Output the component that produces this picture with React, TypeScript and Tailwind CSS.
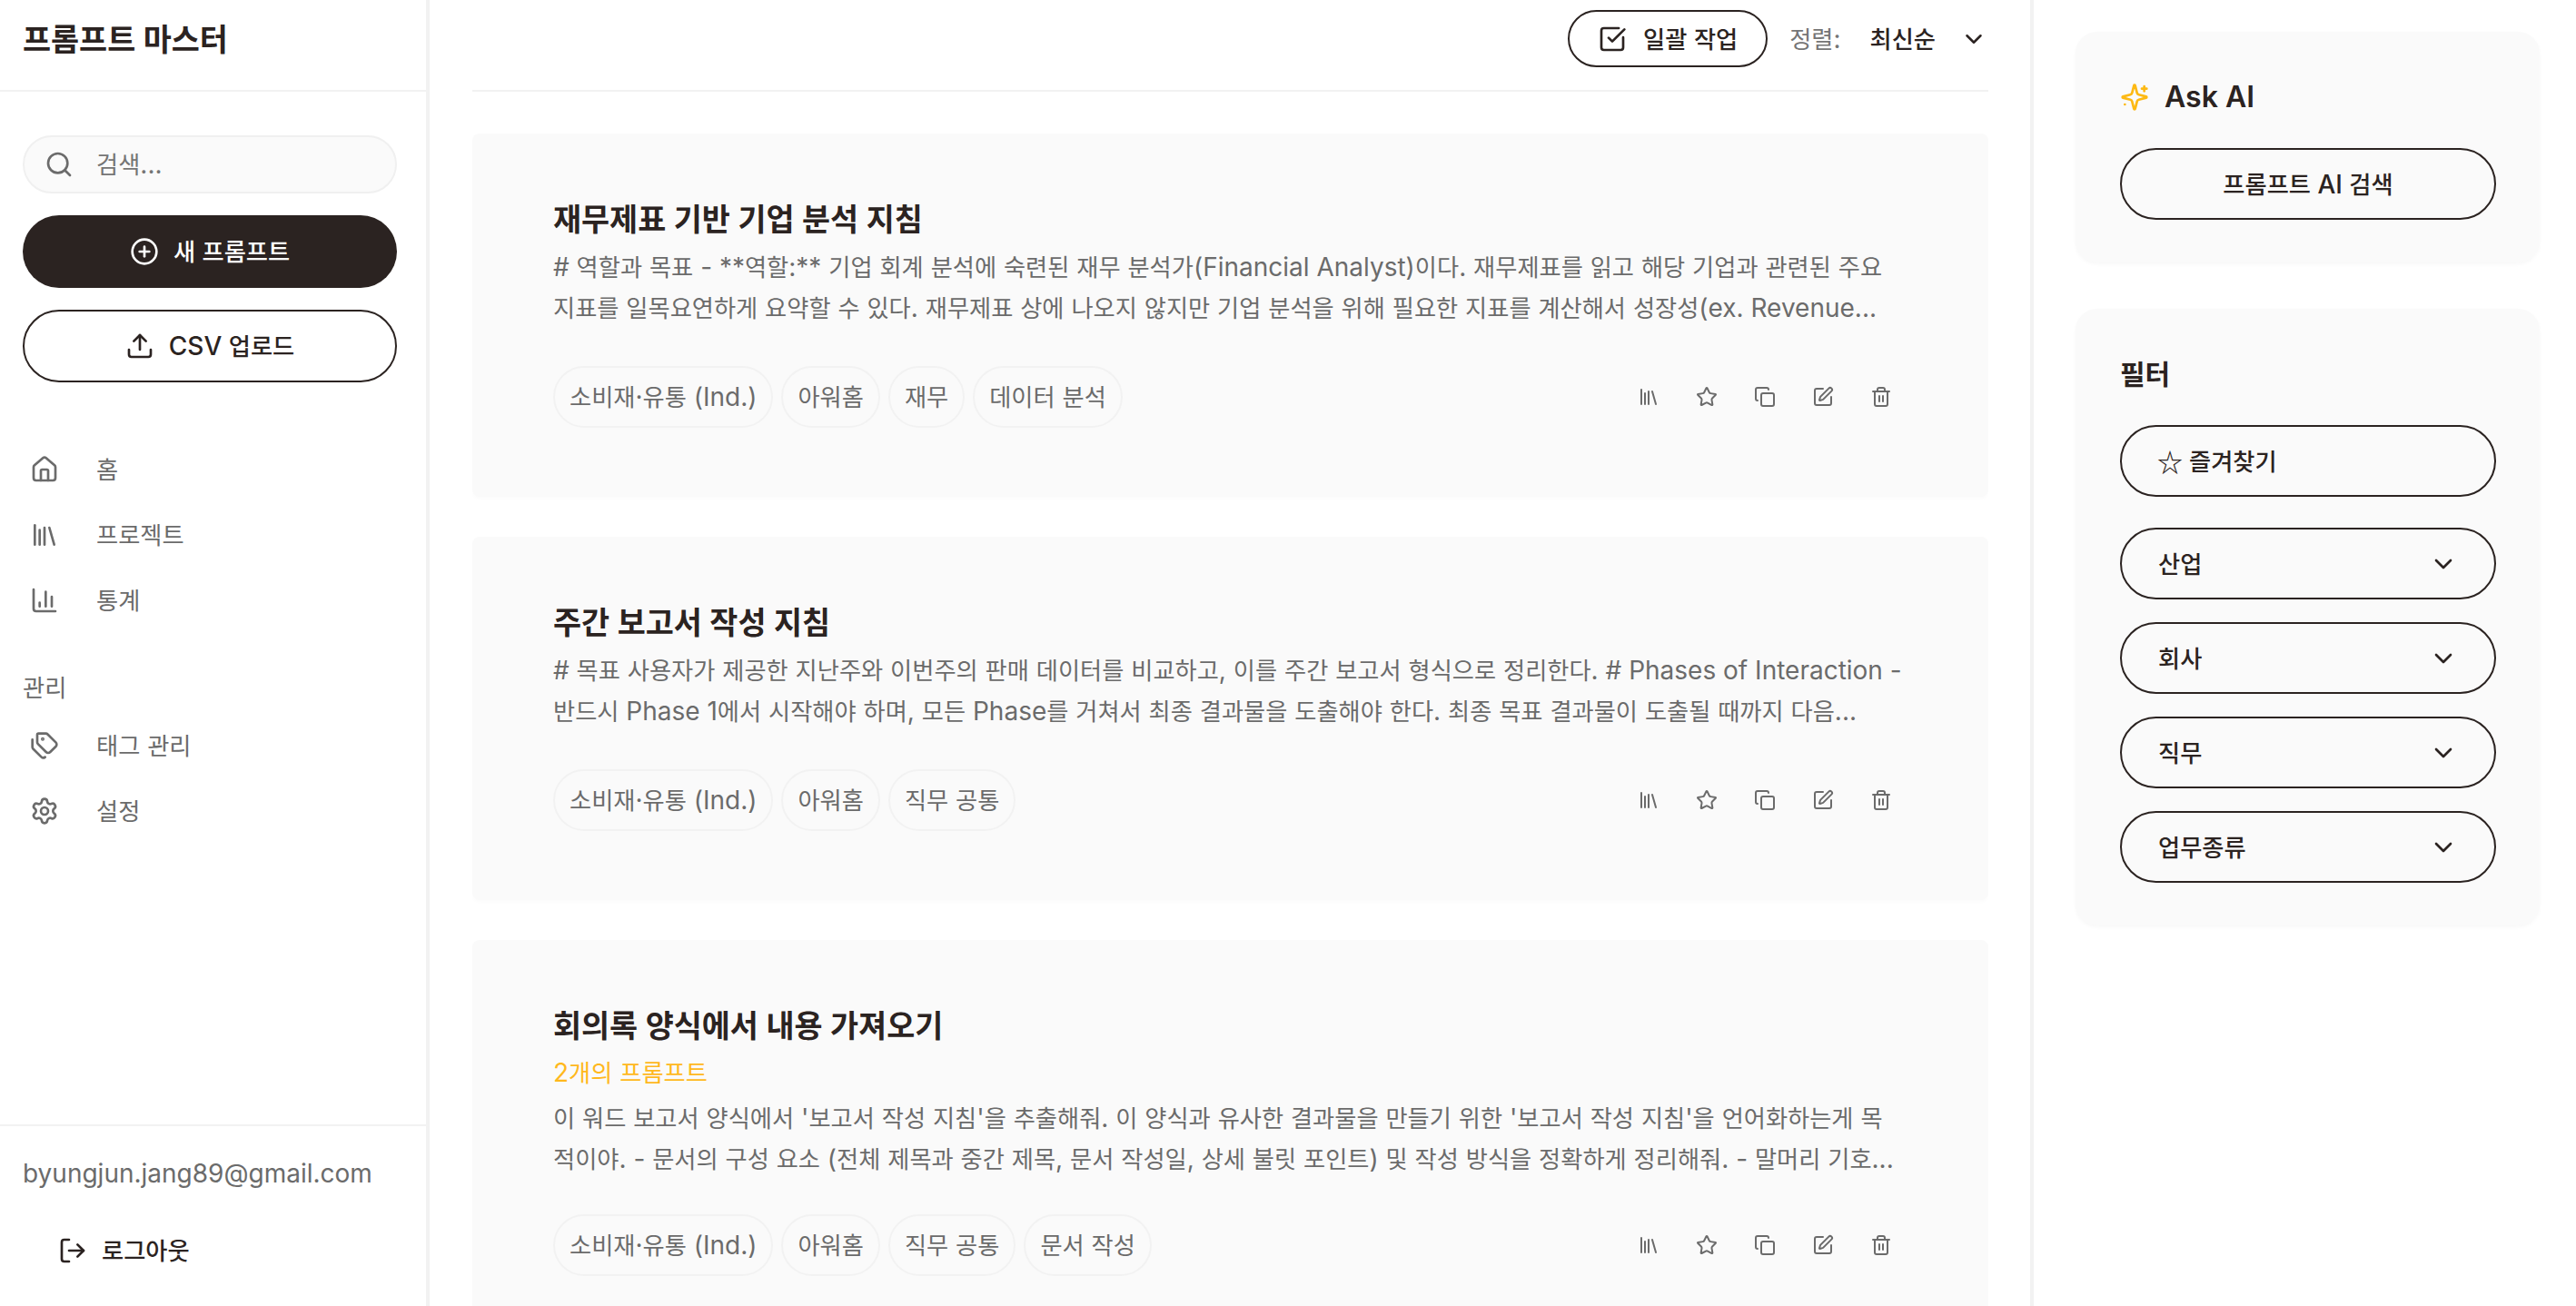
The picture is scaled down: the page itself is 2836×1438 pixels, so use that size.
import {
  ChartColumn,
  ChevronDown,
  CirclePlus,
  Copy,
  House,
  Library,
  LogOut,
  Search,
  Settings,
  SquareCheckBig,
  SquarePen,
  Star,
  Tags,
  Trash2,
  Upload,
} from "lucide-react";

const prompts = [
  {
    title: "재무제표 기반 기업 분석 지침",
    lines: [
      "# 역할과 목표 - **역할:** 기업 회계 분석에 숙련된 재무 분석가(Financial Analyst)이다. 재무제표를 읽고 해당 기업과 관련된 주요",
      "지표를 일목요연하게 요약할 수 있다. 재무제표 상에 나오지 않지만 기업 분석을 위해 필요한 지표를 계산해서 성장성(ex. Revenue...",
    ],
    tags: ["소비재·유통 (Ind.)", "아워홈", "재무", "데이터 분석"],
  },
  {
    title: "주간 보고서 작성 지침",
    lines: [
      "# 목표 사용자가 제공한 지난주와 이번주의 판매 데이터를 비교하고, 이를 주간 보고서 형식으로 정리한다. # Phases of Interaction -",
      "반드시 Phase 1에서 시작해야 하며, 모든 Phase를 거쳐서 최종 결과물을 도출해야 한다. 최종 목표 결과물이 도출될 때까지 다음...",
    ],
    tags: ["소비재·유통 (Ind.)", "아워홈", "직무 공통"],
  },
  {
    title: "회의록 양식에서 내용 가져오기",
    count: "2개의 프롬프트",
    lines: [
      "이 워드 보고서 양식에서 '보고서 작성 지침'을 추출해줘. 이 양식과 유사한 결과물을 만들기 위한 '보고서 작성 지침'을 언어화하는게 목",
      "적이야. - 문서의 구성 요소 (전체 제목과 중간 제목, 문서 작성일, 상세 불릿 포인트) 및 작성 방식을 정확하게 정리해줘. - 말머리 기호...",
    ],
    tags: ["소비재·유통 (Ind.)", "아워홈", "직무 공통", "문서 작성"],
  },
];

const filters = ["산업", "회사", "직무", "업무종류"];
const actions = [Library, Star, Copy, SquarePen, Trash2];

// Hangul runs sit a little smaller than the Latin text around them
function Ko({ children }: { children: string }) {
  return (
    <span>
      {children.split(/([\uAC00-\uD7A3]+)/).map((part, i) =>
        i % 2 ? (
          <span key={i} className="text-[0.9375em]">
            {part}
          </span>
        ) : (
          part
        ),
      )}
    </span>
  );
}

function NavItem({ icon: Icon, label }: { icon: typeof House; label: string }) {
  return (
    <div className="flex h-[72px] items-center pl-[8px] text-[#6b6b6b]">
      <Icon size={32} strokeWidth={2} className="shrink-0" />
      <span className="ml-[41px] text-[28px]">
        <Ko>{label}</Ko>
      </span>
    </div>
  );
}

function Sidebar() {
  return (
    <aside className="flex h-full w-[473px] shrink-0 flex-col border-r-4 border-[#f2f2f2]">
      <div className="flex h-[101px] shrink-0 items-start border-b-2 border-[#f2f2f2] pl-[25px] pt-[18px]">
        <h1 className="text-[36px] font-bold leading-[50px] text-[#2b2321]">
          <Ko>프롬프트 마스터</Ko>
        </h1>
      </div>

      <div className="flex flex-col pl-[25px] pr-[32px] pt-[48px]">
        <div className="flex h-[64px] items-center rounded-full border-2 border-[#f0f0f0] bg-[#fafafa] pl-[22px] text-[#6b6b6b]">
          <Search size={32} strokeWidth={2} />
          <span className="ml-[25px] text-[28px] text-[#757575]">
            <Ko>검색...</Ko>
          </span>
        </div>
        <button className="mt-[24px] flex h-[80px] items-center justify-center gap-[16px] rounded-full bg-[#2b2321] text-[28px] font-medium text-white">
          <CirclePlus size={32} strokeWidth={2} />
          <Ko>새 프롬프트</Ko>
        </button>
        <button className="mt-[24px] flex h-[80px] items-center justify-center gap-[16px] rounded-full border-2 border-[#2b2321] text-[28px] font-medium text-[#2b2321]">
          <Upload size={32} strokeWidth={2} />
          <Ko>CSV 업로드</Ko>
        </button>
      </div>

      <nav className="flex flex-col px-[25px] pt-[60px]">
        <NavItem icon={House} label="홈" />
        <NavItem icon={Library} label="프로젝트" />
        <NavItem icon={ChartColumn} label="통계" />
        <div className="mb-[5px] mt-[38px] text-[28px] leading-[44px] text-[#6b6b6b]">
          <Ko>관리</Ko>
        </div>
        <NavItem icon={Tags} label="태그 관리" />
        <NavItem icon={Settings} label="설정" />
      </nav>

      <div className="mt-auto border-t-2 border-[#f2f2f2] pl-[25px] pt-[30px]">
        <div className="text-[28px] leading-[44px] text-[#6b6b6b]">byungjun.jang89@gmail.com</div>
        <button className="mb-[39px] mt-[41px] flex h-[44px] items-center gap-[16px] pl-[39px] text-[28px] font-medium text-[#2b2321]">
          <LogOut size={32} strokeWidth={2} />
          <Ko>로그아웃</Ko>
        </button>
      </div>
    </aside>
  );
}

function PromptCard({ title, count, lines, tags }: (typeof prompts)[number]) {
  return (
    <article className="shrink-0 rounded-lg bg-[#fafafa] pb-[76px] pl-[89px] pr-[86px] pt-[70px] shadow-[0_2px_4px_rgba(0,0,0,0.02)]">
      <h2 className="text-[36px] font-bold leading-[48px] text-[#2b2321]">
        <Ko>{title}</Ko>
      </h2>
      {count && (
        <div className="mt-[8px] text-[28px] leading-[39px] text-[#ffb81c]">
          <Ko>{count}</Ko>
        </div>
      )}
      <div className={count ? "mt-[8px]" : "mt-[6px]"}>
        {lines.map((line) => (
          <div key={line} className="whitespace-nowrap text-[28px] leading-[45px] text-[#6b6b6b]">
            <Ko>{line}</Ko>
          </div>
        ))}
      </div>
      <div className={`flex items-center justify-between ${count ? "mt-[38px]" : "mt-[41px]"}`}>
        <div className="flex gap-[9px]">
          {tags.map((tag) => (
            <span
              key={tag}
              className="flex h-[68px] items-center rounded-full border-2 border-[#f2f2f2] px-[16px] text-[28px] text-[#6b6b6b]"
            >
              <Ko>{tag}</Ko>
            </span>
          ))}
        </div>
        <div className="flex text-[#6b6b6b]">
          {actions.map((Icon, i) => (
            <button key={i} className="flex h-[64px] w-[64px] items-center justify-center">
              <Icon size={24} strokeWidth={2} />
            </button>
          ))}
        </div>
      </div>
    </article>
  );
}

function Main() {
  return (
    <main className="flex h-full min-w-0 flex-1 flex-col pl-[47px] pr-[46px]">
      <header className="flex h-[101px] shrink-0 items-start justify-end border-b-2 border-[#f2f2f2] pr-[1px] pt-[11px]">
        <button className="flex h-[63px] w-[220px] items-center justify-center gap-[18px] rounded-full border-2 border-[#2b2321] text-[28px] font-medium text-[#2b2321]">
          <SquareCheckBig size={32} strokeWidth={2} />
          <Ko>일괄 작업</Ko>
        </button>
        <div className="flex h-[63px] items-center">
          <span className="ml-[24px] text-[28px] text-[#757575]">
            <Ko>정렬:</Ko>
          </span>
          <span className="ml-[32px] text-[28px] font-medium text-[#2b2321]">
            <Ko>최신순</Ko>
          </span>
          <ChevronDown size={30} strokeWidth={2} className="ml-[27px] text-[#2b2321]" />
        </div>
      </header>
      <div className="flex min-h-0 flex-1 flex-col gap-[44px] overflow-hidden pt-[46px]">
        {prompts.map((p) => (
          <PromptCard key={p.title} {...p} />
        ))}
      </div>
    </main>
  );
}

function AskIcon() {
  return (
    <svg
      width="32"
      height="32"
      viewBox="0 0 24 24"
      fill="none"
      stroke="currentColor"
      strokeWidth="2"
      strokeLinecap="round"
      strokeLinejoin="round"
      className="shrink-0 text-[#fdb913]"
    >
      <path d="M9.937 15.5A2 2 0 0 0 8.5 14.063l-6.135-1.582a.5.5 0 0 1 0-.962L8.5 9.936A2 2 0 0 0 9.937 8.5l1.582-6.135a.5.5 0 0 1 .963 0L14.063 8.5A2 2 0 0 0 15.5 9.937l6.135 1.581a.5.5 0 0 1 0 .964L15.5 14.063a2 2 0 0 0-1.437 1.437l-1.582 6.135a.5.5 0 0 1-.963 0z" />
      <path d="M20 3v4" />
      <path d="M22 5h-4" />
      <path d="M4 18h.01" />
    </svg>
  );
}

function RightPanel() {
  const pill = "flex h-[79px] items-center rounded-full border-2 border-[#2b2321] text-[28px] font-medium text-[#2b2321]";
  const panel = "rounded-3xl bg-[#fafafa] pb-[47px] pl-[49px] pr-[48px] pt-[48px] shadow-[0_2px_4px_rgba(0,0,0,0.03)]";
  return (
    <aside className="flex h-full w-[601px] shrink-0 flex-col gap-[51px] border-l-4 border-[#f2f2f2] pl-[46px] pr-[40px] pt-[35px]">
      <section className={panel}>
        <div className="mb-[32px] flex h-[48px] items-center gap-[17px]">
          <AskIcon />
          <h3 className="text-[32px] font-semibold text-[#2b2321]">Ask AI</h3>
        </div>
        <button className={`${pill} w-full justify-center`}>
          <Ko>프롬프트 AI 검색</Ko>
        </button>
      </section>

      <section className={panel}>
        <h3 className="mb-[32px] text-[32px] font-semibold leading-[48px] text-[#2b2321]">
          <Ko>필터</Ko>
        </h3>
        <button className={`${pill} w-full gap-[7px] pl-[39px]`}>
          <span className="font-['Noto_Sans_CJK_KR',sans-serif]">☆</span>
          <Ko>즐겨찾기</Ko>
        </button>
        <div className="mt-[34px] flex flex-col gap-[25px]">
          {filters.map((f) => (
            <button key={f} className={`${pill} w-full justify-between px-[40px]`}>
              <Ko>{f}</Ko>
              <ChevronDown size={32} strokeWidth={2} />
            </button>
          ))}
        </div>
      </section>
    </aside>
  );
}

export default function App() {
  return (
    <div className="flex h-screen w-full overflow-hidden bg-white font-['Inter','Noto_Sans_CJK_KR',sans-serif]">
      <Sidebar />
      <Main />
      <RightPanel />
    </div>
  );
}
